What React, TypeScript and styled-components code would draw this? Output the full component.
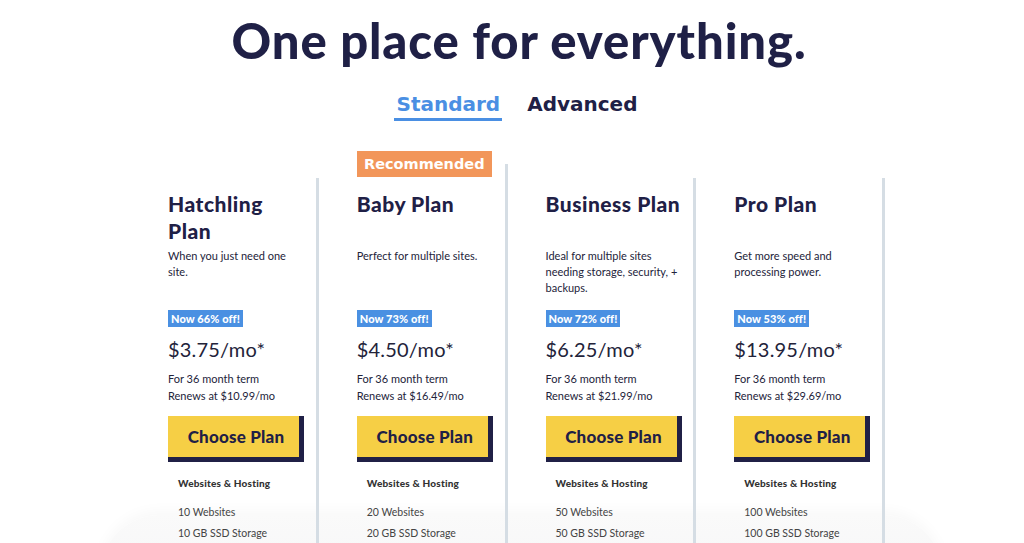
import React from "react";
import styled, { createGlobalStyle } from "styled-components";

const Global = createGlobalStyle`
  html, body { margin: 0; padding: 0; background: #fff; }
  body { font-family: "Lato", "Liberation Sans", sans-serif; color: #22223f; overflow: hidden; }
  * { box-sizing: border-box; }
`;

const Page = styled.div`
  width: 1024px;
  height: 543px;
  overflow: hidden;
  position: relative;
  display: flex;
  flex-direction: column;
  align-items: center;
`;

const Title = styled.h1`
  margin: 10px 0 0 14px;
  font-family: "Lato", sans-serif;
  font-weight: 900;
  font-size: 49px;
  line-height: 60px;
  letter-spacing: 0.9px;
  color: #1f2046;
`;

const Tabs = styled.div`
  display: flex;
  gap: 23px;
  margin: 22px 0 0 10px;
`;

const Tab = styled.div<{ $active?: boolean }>`
  font-family: "DejaVu Sans", sans-serif;
  font-weight: 700;
  font-size: 20px;
  line-height: 24px;
  padding: 0 2px 2px;
  color: ${(p) => (p.$active ? "#4a8fe3" : "#1f2046")};
  border-bottom: 3px solid ${(p) => (p.$active ? "#4a8fe3" : "transparent")};
`;

const Grid = styled.div`
  align-self: flex-start;
  margin: 30px 0 0 130px;
  display: grid;
  grid-template-columns: repeat(4, 188.75px);
  position: relative;
  &::before {
    content: "";
    position: absolute;
    left: -30px;
    right: -58px;
    top: 364px;
    height: 200px;
    border-radius: 60px;
    background: linear-gradient(#fafafa, #efeff1);
    box-shadow: 0 -4px 14px rgba(0, 0, 0, 0.03);
    z-index: 0;
  }
`;

const Column = styled.div<{ $lineTop: number }>`
  position: relative;
  z-index: 1;
  padding: 0 12px 0 38px;
  display: flex;
  flex-direction: column;
  &::after {
    content: "";
    position: absolute;
    right: 0;
    width: 3px;
    top: ${(p) => p.$lineTop}px;
    bottom: -40px;
    background: #d5dde4;
  }
`;

const BadgeSlot = styled.div`
  height: 26px;
  display: flex;
`;

const Recommended = styled.div`
  background: #f2965a;
  color: #fff;
  font-family: "DejaVu Sans", sans-serif;
  font-weight: 700;
  font-size: 14.5px;
  line-height: 26px;
  width: 135px;
  text-align: center;
`;

const PlanName = styled.h2`
  margin: 13px 0 0;
  font-weight: 900;
  font-size: 21px;
  line-height: 27px;
  letter-spacing: 0.5px;
  min-height: 54px;
  color: #1f2046;
  max-width: 137px;
`;

const Desc = styled.p`
  margin: 4px 0 0;
  font-size: 11px;
  line-height: 16px;
  min-height: 48px;
  color: #23233a;
  max-width: 150px;
`;

const Discount = styled.span`
  align-self: flex-start;
  margin-top: 14px;
  background: #4a90e2;
  color: #fff;
  font-weight: 900;
  font-size: 11px;
  line-height: 17px;
  padding: 0 3px;
  letter-spacing: 0.1px;
`;

const Price = styled.div`
  margin-top: 8px;
  font-size: 20px;
  font-weight: 400;
  line-height: 28px;
  color: #23233a;
  letter-spacing: 0.2px;
`;

const Term = styled.div`
  margin-top: 7px;
  font-size: 11px;
  line-height: 17px;
  color: #23233a;
`;

const Button = styled.button`
  margin-top: 12px;
  width: 136px;
  height: 46px;
  border: none;
  padding: 0 0 5px 0;
  background: #f6cf45;
  box-shadow: inset -5px -5px 0 #202046;
  font-family: "Lato", sans-serif;
  font-weight: 900;
  font-size: 17px;
  letter-spacing: 0.2px;
  color: #1f2046;
  cursor: pointer;
`;

const FeatureHead = styled.div`
  margin: 14px 0 0 10px;
  font-weight: 900;
  font-size: 10px;
  line-height: 14px;
  letter-spacing: 0.2px;
  color: #333;
`;

const FeatureList = styled.div`
  margin-top: 5px;
  display: flex;
  flex-direction: column;
`;

const Feature = styled.div`
  margin: 0 0 0 10px;
  font-size: 10.5px;
  line-height: 21px;
  color: #444;
  &:first-of-type {
    margin-top: 7px;
  }
`;

const plans = [
  {
    name: "Hatchling Plan",
    desc: "When you just need one site.",
    off: "Now 66% off!",
    price: "$3.75/mo*",
    renew: "Renews at $10.99/mo",
    sites: "10 Websites",
    storage: "10 GB SSD Storage",
    lineTop: 27,
  },
  {
    name: "Baby Plan",
    desc: "Perfect for multiple sites.",
    off: "Now 73% off!",
    price: "$4.50/mo*",
    renew: "Renews at $16.49/mo",
    sites: "20 Websites",
    storage: "20 GB SSD Storage",
    recommended: true,
    lineTop: 13,
  },
  {
    name: "Business Plan",
    desc: "Ideal for multiple sites needing storage, security, + backups.",
    off: "Now 72% off!",
    price: "$6.25/mo*",
    renew: "Renews at $21.99/mo",
    sites: "50 Websites",
    storage: "50 GB SSD Storage",
    lineTop: 27,
  },
  {
    name: "Pro Plan",
    desc: "Get more speed and processing power.",
    off: "Now 53% off!",
    price: "$13.95/mo*",
    renew: "Renews at $29.69/mo",
    sites: "100 Websites",
    storage: "100 GB SSD Storage",
    lineTop: 27,
  },
];

export default function App() {
  return (
    <Page>
      <Global />
      <Title>One place for everything.</Title>
      <Tabs>
        <Tab $active>Standard</Tab>
        <Tab>Advanced</Tab>
      </Tabs>
      <Grid>
        {plans.map((p) => (
          <Column key={p.name} $lineTop={p.lineTop}>
            <BadgeSlot>{p.recommended && <Recommended>Recommended</Recommended>}</BadgeSlot>
            <PlanName>{p.name}</PlanName>
            <Desc>{p.desc}</Desc>
            <Discount>{p.off}</Discount>
            <Price>{p.price}</Price>
            <Term>
              For 36 month term
              <br />
              {p.renew}
            </Term>
            <Button>Choose Plan</Button>
            <FeatureHead>Websites &amp; Hosting</FeatureHead>
            <FeatureList>
              <Feature>{p.sites}</Feature>
              <Feature>{p.storage}</Feature>
            </FeatureList>
          </Column>
        ))}
      </Grid>
    </Page>
  );
}
